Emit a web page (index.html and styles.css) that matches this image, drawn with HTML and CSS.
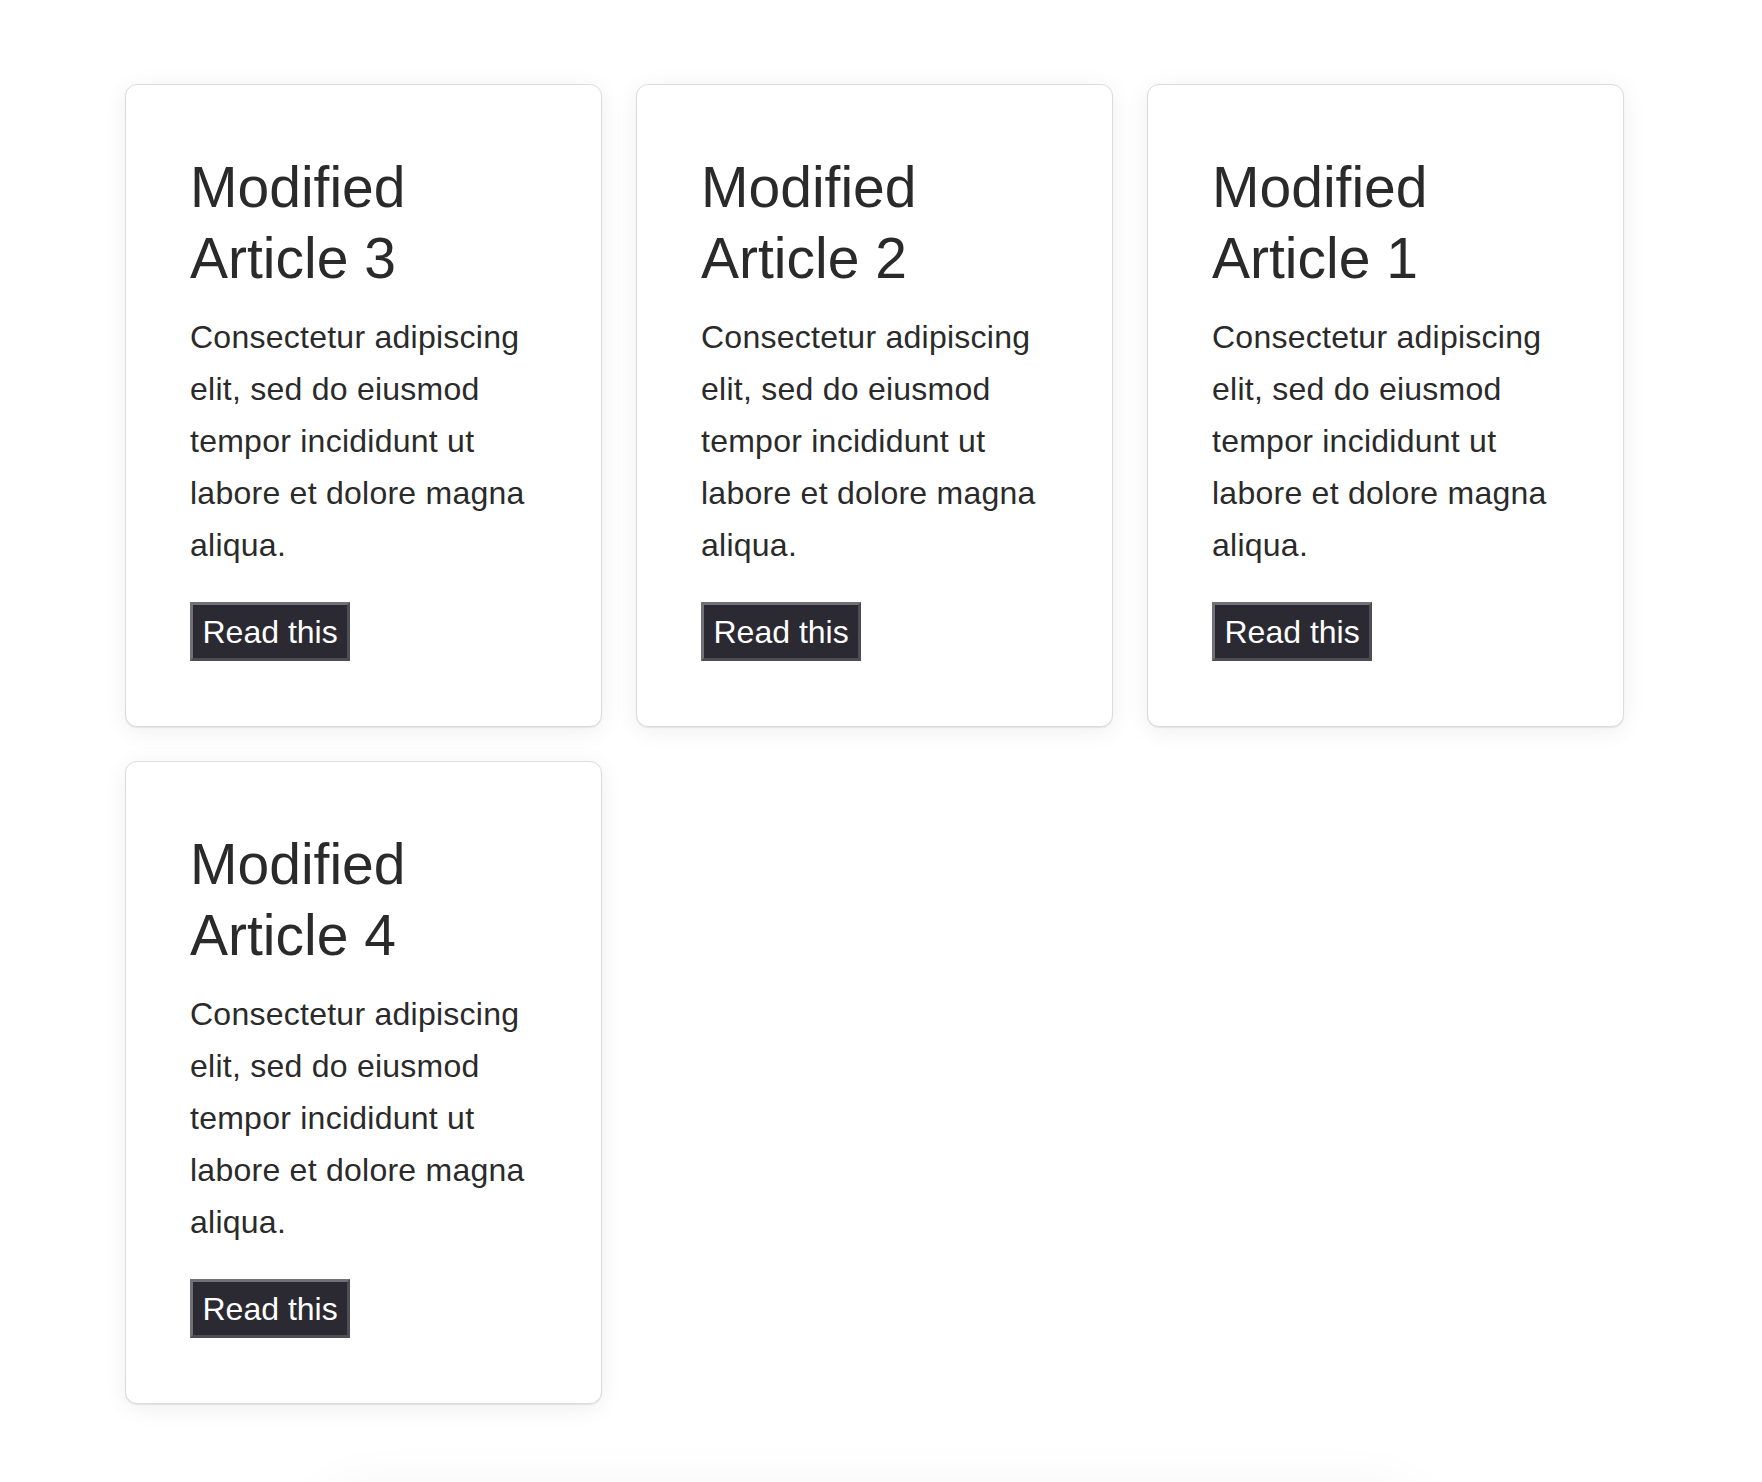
FILE: index.html
```html
<!DOCTYPE html>
<html lang="en">
<head>
<meta charset="utf-8">
<title>Articles</title>
<link rel="stylesheet" href="styles.css">
</head>
<body>
<div class="page">
  <main class="grid">
    <article class="card">
      <h2 class="card-title">Modified Article 3</h2>
      <p class="card-text">Consectetur adipiscing elit, sed do eiusmod tempor incididunt ut labore et dolore magna aliqua.</p>
      <button class="btn" type="button">Read this</button>
    </article>
    <article class="card">
      <h2 class="card-title">Modified Article 2</h2>
      <p class="card-text">Consectetur adipiscing elit, sed do eiusmod tempor incididunt ut labore et dolore magna aliqua.</p>
      <button class="btn" type="button">Read this</button>
    </article>
    <article class="card">
      <h2 class="card-title">Modified Article 1</h2>
      <p class="card-text">Consectetur adipiscing elit, sed do eiusmod tempor incididunt ut labore et dolore magna aliqua.</p>
      <button class="btn" type="button">Read this</button>
    </article>
    <article class="card">
      <h2 class="card-title">Modified Article 4</h2>
      <p class="card-text">Consectetur adipiscing elit, sed do eiusmod tempor incididunt ut labore et dolore magna aliqua.</p>
      <button class="btn" type="button">Read this</button>
    </article>
  </main>
  <footer class="footer"></footer>
</div>
</body>
</html>
```

FILE: styles.css
```css
html, body {
  margin: 0;
  padding: 0;
  background: #ffffff;
}

body {
  font-family: "Liberation Sans", Arial, Helvetica, sans-serif;
  color: #2a2a2a;
}

.page {
  height: 1482px;
  overflow: hidden;
  padding: 84px 0 0 125px;
  box-sizing: border-box;
}

.grid {
  display: grid;
  grid-template-columns: repeat(3, 477px);
  column-gap: 34px;
  row-gap: 34px;
}

.card {
  background: #ffffff;
  border: 1px solid #dcdcdc;
  border-radius: 12px;
  padding: 67px 64px 65px 64px;
  box-shadow: 0 1px 1px rgba(0, 0, 0, 0.08), 0 4px 24px rgba(0, 0, 0, 0.065);
}

.card-title {
  margin: 0 0 17px 0;
  font-size: 57px;
  line-height: 71px;
  font-weight: 400;
  color: #2a2a2a;
}

.card-text {
  margin: 0 0 31px 0;
  font-size: 32px;
  line-height: 52px;
  letter-spacing: 0.25px;
  color: #2a2a2a;
}

.btn {
  display: inline-block;
  font-family: "Liberation Sans", Arial, Helvetica, sans-serif;
  font-size: 32px;
  line-height: 37px;
  color: #ffffff;
  background: #2b2a33;
  border-style: solid;
  border-width: 3px;
  border-color: #717076 #4e4d54 #4e4d54 #717076;
  padding: 9px 9.5px 7px 9.5px;
  margin: 0;
  border-radius: 0;
  cursor: pointer;
}

.footer {
  margin: 87px 0 0 196px;
  width: 1100px;
  height: 200px;
  background: #ffffff;
  box-shadow: 0 0 60px rgba(0, 0, 0, 0.05);
  border-radius: 40px;
}
```
